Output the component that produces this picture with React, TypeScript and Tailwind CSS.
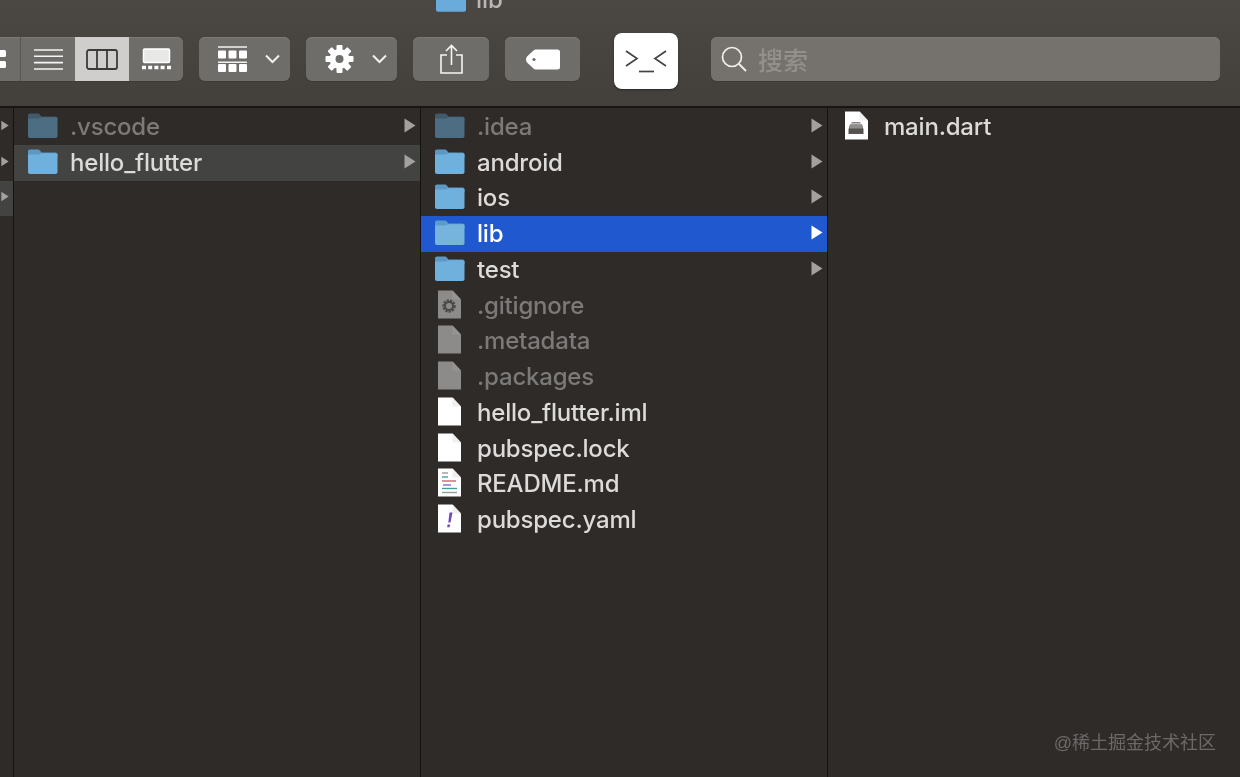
import React from "react";

const FONT = "font-['Inter','Liberation_Sans',sans-serif]";

function Folder({ dim, selected }: { dim?: boolean; selected?: boolean }) {
  const back = dim ? "#41596b" : selected ? "#5a9ccb" : "#5d98c4";
  const front = dim ? "#4d6d83" : selected ? "#76b4de" : "#6fb0dc";
  return (
    <svg width="31" height="25" viewBox="0 0 31 25" className="block">
      <path d="M1 2.500C1 1.300 1.700.5 3 .5h7.500c1 0 1.600.3 2.300 1L14.500 3.500h14c1.200 0 2 .7 2 2v3H1z" fill={back} />
      <path d="M1 5.500h9c1.500 0 2.300-.3 3.200-.8.6-.3 1.200-.5 2-.5h13.500c1.200 0 1.800.7 1.800 1.900v16.900c0 1.300-.7 2-2 2H3c-1.300 0-2-.7-2-2z" fill={front} />
    </svg>
  );
}

function FileIcon({ kind }: { kind: "plain" | "dim" | "gear" | "readme" | "yaml" | "dart" }) {
  const fill = kind === "dim" || kind === "gear" ? "#8c8b89" : "#ffffff";
  return (
    <svg width="23" height="29" viewBox="0 0 23 29" className="block">
      <path d="M0 0.5h14.500L23 9.500v19H0z" fill={fill} />
      <path d="M14.500 0.5L23 9.500h-8.500z" fill={kind === "dim" || kind === "gear" ? "#959492" : "#efefef"} />
      {kind === "gear" && (
        <g>
          <circle cx="11" cy="16" r="5.200" fill="none" stroke="#4a4948" strokeWidth="3" strokeDasharray="2.100 1" />
          <circle cx="11" cy="16" r="4" fill="none" stroke="#4a4948" strokeWidth="2" />
        </g>
      )}
      {kind === "readme" && (
        <g strokeWidth="1.400">
          <path d="M4 5h6" stroke="#9a9a9a" />
          <path d="M4 9h6" stroke="#3fa39a" />
          <path d="M4 13h14" stroke="#c76a6a" />
          <path d="M5 17h8" stroke="#7d6bd0" />
          <path d="M4 20.500h15" stroke="#3fa39a" />
          <path d="M4 24.500h15" stroke="#9a9a9a" />
        </g>
      )}
      {kind === "yaml" && <path d="M11.500 8.500h3l-2 10h-2.200zM9.600 20.500h2.500l-.5 2.800H9.100z" fill="#6f4bb0" />}
      {kind === "dart" && (
        <g>
          <path d="M5 13.500h12l1.500 5v4.500h-15v-4.500z" fill="#55534f" />
          <path d="M5 13.500h12l1 4H4z" fill="#8f8e8b" />
          <path d="M6.500 11h9v1.600h-9z" fill="#8a8987" />
        </g>
      )}
    </svg>
  );
}

function Arrow({ light }: { light?: boolean }) {
  return (
    <svg width="12" height="15" viewBox="0 0 12 15" className="block">
      <path d="M0.5 0.5L11.500 7.500L0.5 14.500z" fill={light ? "#ffffff" : "#a3a19f"} />
    </svg>
  );
}

type Item = {
  name: string;
  icon: React.ReactNode;
  arrow?: boolean;
  dim?: boolean;
  state?: "active" | "muted";
};

function Row({ item }: { item: Item }) {
  const bg = item.state === "active" ? "bg-[#2059cf]" : item.state === "muted" ? "bg-[#434342]" : "";
  const color = item.state === "active" ? "text-white" : item.dim ? "text-[#7c7a78]" : "text-[#dddbd9]";
  return (
    <div className={`h-[35.75px] flex items-center pl-[13px] pr-[4px] ${bg}`}>
      <div className="w-[31px] flex justify-center shrink-0 mb-[3px]">{item.icon}</div>
      <span className={`ml-[12px] text-[24px] leading-none font-medium tracking-[-0.2px] whitespace-nowrap ${color}`}>{item.name}</span>
      {item.arrow && (
        <div className="ml-auto mb-[3px]">
          <Arrow light={item.state === "active"} />
        </div>
      )}
    </div>
  );
}

const col1: Item[] = [
  { name: ".vscode", icon: <Folder dim />, arrow: true, dim: true },
  { name: "hello_flutter", icon: <Folder />, arrow: true, state: "muted" },
];

const col2: Item[] = [
  { name: ".idea", icon: <Folder dim />, arrow: true, dim: true },
  { name: "android", icon: <Folder />, arrow: true },
  { name: "ios", icon: <Folder />, arrow: true },
  { name: "lib", icon: <Folder selected />, arrow: true, state: "active" },
  { name: "test", icon: <Folder />, arrow: true },
  { name: ".gitignore", icon: <FileIcon kind="gear" />, dim: true },
  { name: ".metadata", icon: <FileIcon kind="dim" />, dim: true },
  { name: ".packages", icon: <FileIcon kind="dim" />, dim: true },
  { name: "hello_flutter.iml", icon: <FileIcon kind="plain" /> },
  { name: "pubspec.lock", icon: <FileIcon kind="plain" /> },
  { name: "README.md", icon: <FileIcon kind="readme" /> },
  { name: "pubspec.yaml", icon: <FileIcon kind="yaml" /> },
];

const col3: Item[] = [{ name: "main.dart", icon: <FileIcon kind="dart" /> }];

const btn = "h-[44px] rounded-[6px] bg-[#6f6d6a] flex items-center shadow-[inset_0_1px_0_#7b7976,0_1px_0_#3c3a37]";

function Chevron() {
  return (
    <svg width="15" height="10" viewBox="0 0 15 10" className="block">
      <path d="M1 1.500L7.500 8L14 1.500" fill="none" stroke="#f2f2f1" strokeWidth="2" />
    </svg>
  );
}

function Toolbar() {
  return (
    <div className="h-[106px] shrink-0 overflow-hidden bg-gradient-to-b from-[#4b4844] to-[#433f3b] flex flex-col">
      <div className="h-[12px] shrink-0 flex items-end pl-[436px]">
        <div className="flex items-end gap-[10px] shrink-0">
          <svg width="30" height="12" viewBox="0 0 30 12" className="block">
            <path d="M0 0h30v9.500c0 1.500-.8 2.200-2 2.200H2c-1.200 0-2-.7-2-2.200z" fill="#69acdb" />
          </svg>
          <span className="text-[24px] leading-[24px] font-medium text-[#b9b7b4] h-[12px] overflow-hidden flex items-end">lib</span>
        </div>
      </div>
      <div className="flex items-center h-[70px] mt-[12px]">
        <div className={`${btn} ml-[-32px] overflow-hidden rounded-r-[6px]`}>
          <div className="w-[53px] h-full flex items-center justify-end pr-[14px] border-r border-[#575552]">
            <svg width="18" height="20" viewBox="0 0 18 20">
              <rect x="0" y="1" width="7" height="7" rx="1.500" fill="#fff" />
              <rect x="11" y="1" width="7" height="7" rx="1.500" fill="#fff" />
              <rect x="0" y="12" width="7" height="7" rx="1.500" fill="#fff" />
              <rect x="11" y="12" width="7" height="7" rx="1.500" fill="#fff" />
            </svg>
          </div>
          <div className="w-[54px] h-full flex items-center justify-center">
            <svg width="29" height="21" viewBox="0 0 29 21">
              <path d="M0 1h29M0 7.300h29M0 13.600h29M0 20h29" stroke="#f5f5f5" strokeWidth="1.600" />
            </svg>
          </div>
          <div className="w-[54px] h-full flex items-center justify-center bg-[#cfcecc]">
            <svg width="32" height="21" viewBox="0 0 32 21">
              <rect x="1" y="1" width="30" height="19" rx="2" fill="none" stroke="#3b3a38" strokeWidth="1.800" />
              <path d="M11 1v19M21 1v19" stroke="#3b3a38" strokeWidth="1.800" />
            </svg>
          </div>
          <div className="w-[54px] h-full flex items-center justify-center">
            <svg width="29" height="22" viewBox="0 0 29 22">
              <rect x="1.500" y="1" width="26" height="13.500" rx="1" fill="#e8e8e6" stroke="#fff" strokeWidth="1.500" />
              <path d="M0 19.500h4M6.200 19.500h4M12.400 19.500h4M18.600 19.500h4M25 19.500h4" stroke="#fff" strokeWidth="3.500" />
            </svg>
          </div>
        </div>
        <div className={`${btn} w-[91px] ml-[16px] pl-[19px]`}>
          <svg width="29" height="26" viewBox="0 0 29 26">
            <path d="M0 1h29M0 16.200h29" stroke="#f2f2f1" strokeWidth="1.400" />
            <rect x="0" y="4.500" width="8" height="8" rx="1" fill="#fff" />
            <rect x="10.500" y="4.500" width="8" height="8" rx="1" fill="#fff" />
            <rect x="21" y="4.500" width="8" height="8" rx="1" fill="#fff" />
            <rect x="0" y="18" width="8" height="8" rx="1" fill="#fff" />
            <rect x="10.500" y="18" width="8" height="8" rx="1" fill="#fff" />
            <rect x="21" y="18" width="8" height="8" rx="1" fill="#fff" />
          </svg>
          <div className="ml-[18px]"><Chevron /></div>
        </div>
        <div className={`${btn} w-[91px] ml-[16px] pl-[19px]`}>
          <svg width="29" height="28" viewBox="0 0 29 28">
            <g fill="#fff">
              <circle cx="14.500" cy="14" r="10" />
              <rect x="11.500" y="0" width="6" height="28" rx="1" />
              <rect x="11.500" y="0" width="6" height="28" rx="1" transform="rotate(45 14.500 14)" />
              <rect x="11.500" y="0" width="6" height="28" rx="1" transform="rotate(90 14.500 14)" />
              <rect x="11.500" y="0" width="6" height="28" rx="1" transform="rotate(135 14.500 14)" />
            </g>
            <circle cx="14.500" cy="14" r="4" fill="#6f6d6a" />
          </svg>
          <div className="ml-[18px]"><Chevron /></div>
        </div>
        <div className={`${btn} w-[76px] ml-[16px] justify-center`}>
          <svg width="23" height="30" viewBox="0 0 23 30">
            <path d="M7 11H1v18h21V11h-6" fill="none" stroke="#f5f5f5" strokeWidth="1.600" />
            <path d="M11.500 21V1.500M6 7l5.500-5.500L17 7" fill="none" stroke="#f5f5f5" strokeWidth="1.600" />
          </svg>
        </div>
        <div className={`${btn} w-[75px] ml-[16px] justify-center`}>
          <svg width="34" height="21" viewBox="0 0 34 21">
            <path d="M10 0.500h21.500a2.500 2.500 0 0 1 2.500 2.500v15a2.500 2.500 0 0 1-2.500 2.500H10c-1 0-1.800-.3-2.500-1L1 13.500c-1.300-1.600-1.300-4.400 0-6L7.500 1.500C8.200.8 9 .5 10 .5z" fill="#fff" />
            <circle cx="8" cy="10.500" r="1.600" fill="#6f6d6a" />
          </svg>
        </div>
        <div className="w-[64px] h-[56px] ml-[34px] mt-[4px] rounded-[8px] bg-white flex items-center justify-center shadow-[0_1px_2px_#2a2826]">
          <svg width="42" height="24" viewBox="0 0 42 24">
            <path d="M1 2l11 7.500L1 17M41 2L30 9.500 41 17" fill="none" stroke="#454443" strokeWidth="1.700" />
            <path d="M14 22.500h15" stroke="#454443" strokeWidth="1.700" />
          </svg>
        </div>
        <div className={`${btn} flex-1 ml-[33px] mr-[20px] pl-[10px] !bg-[#75726d]`}>
          <svg width="26" height="26" viewBox="0 0 26 26">
            <circle cx="11" cy="11" r="9.500" fill="none" stroke="#eeeeec" strokeWidth="1.700" />
            <path d="M18 18l7 7" stroke="#eeeeec" strokeWidth="1.900" />
          </svg>
          <span className="ml-[11px] text-[25px] leading-none font-medium text-[#93908a] font-['Noto_Sans_CJK_SC',sans-serif]">搜索</span>
        </div>
      </div>
    </div>
  );
}

export default function App() {
  return (
    <div className={`relative w-[1240px] h-[777px] overflow-hidden flex flex-col bg-[#2e2b29] ${FONT} blur-[0.4px]`}>
      <Toolbar />
      <div className="flex-1 flex min-h-0 border-t-2 border-[#171614]">
        <div className="w-[14px] shrink-0 border-r border-[#141312] pt-px overflow-hidden">
          {[0, 1, 2].map((i) => (
            <div key={i} className={`h-[35.75px] flex items-center justify-end pr-[4px] ${i === 2 ? "bg-[#434342]" : ""}`}>
              <div className="w-[8px] overflow-hidden flex justify-end mb-[3px]"><Arrow /></div>
            </div>
          ))}
        </div>
        <div className="w-[407px] shrink-0 border-r border-[#141312] pt-px">
          {col1.map((it) => <Row key={it.name} item={it} />)}
        </div>
        <div className="w-[407px] shrink-0 border-r border-[#141312] pt-px">
          {col2.map((it) => <Row key={it.name} item={it} />)}
        </div>
        <div className="flex-1 pt-px">
          {col3.map((it) => <Row key={it.name} item={it} />)}
        </div>
      </div>
      <div className="absolute right-[24px] top-[730px] text-[18px] leading-[26px] text-[#6c6a68] font-['Liberation_Sans','Noto_Sans_CJK_SC',sans-serif]">
        @稀土掘金技术社区
      </div>
    </div>
  );
}
